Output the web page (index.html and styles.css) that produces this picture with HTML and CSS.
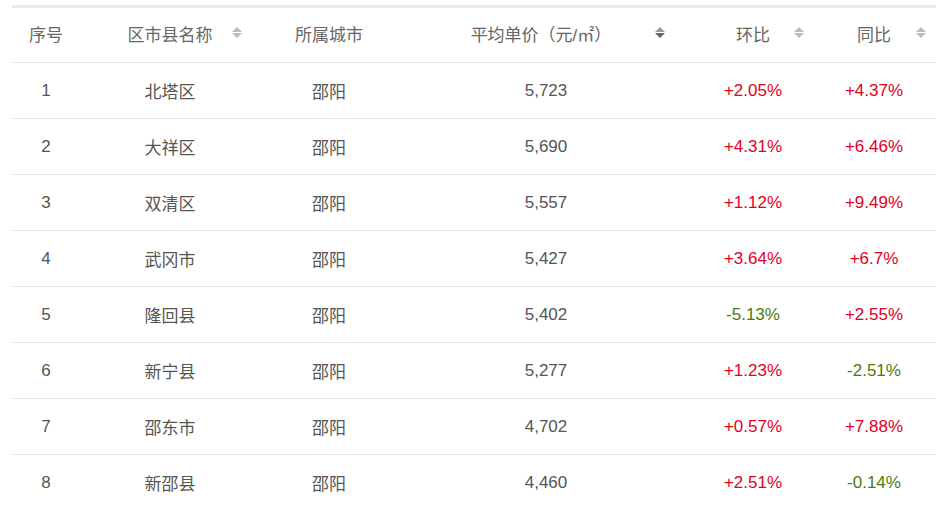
FILE: index.html
```html
<!DOCTYPE html>
<html lang="zh-CN">
<head>
<meta charset="utf-8">
<title>邵阳区县房价</title>
<link rel="stylesheet" href="styles.css">
</head>
<body>
<div class="wrap">
<table class="price-table">
  <colgroup>
    <col class="c1"><col class="c2"><col class="c3"><col class="c4"><col class="c5"><col class="c6">
  </colgroup>
  <thead>
    <tr>
      <th>序号</th>
      <th class="sortable s2">区市县名称<svg class="sort" viewBox="0 0 10 11"><path class="up" d="M5 0 L10 5 L0 5 Z"/><path class="down" d="M0 6 L10 6 L5 11 Z"/></svg></th>
      <th>所属城市</th>
      <th class="sortable s4">平均单价（元/㎡）<svg class="sort" viewBox="0 0 10 11"><path class="up" d="M5 0 L10 5 L0 5 Z"/><path class="down active" d="M0 6 L10 6 L5 11 Z"/></svg></th>
      <th class="sortable s5">环比<svg class="sort" viewBox="0 0 10 11"><path class="up" d="M5 0 L10 5 L0 5 Z"/><path class="down" d="M0 6 L10 6 L5 11 Z"/></svg></th>
      <th class="sortable s6">同比<svg class="sort" viewBox="0 0 10 11"><path class="up" d="M5 0 L10 5 L0 5 Z"/><path class="down" d="M0 6 L10 6 L5 11 Z"/></svg></th>
    </tr>
  </thead>
  <tbody>
    <tr><td>1</td><td>北塔区</td><td>邵阳</td><td>5,723</td><td class="rise">+2.05%</td><td class="rise">+4.37%</td></tr>
    <tr><td>2</td><td>大祥区</td><td>邵阳</td><td>5,690</td><td class="rise">+4.31%</td><td class="rise">+6.46%</td></tr>
    <tr><td>3</td><td>双清区</td><td>邵阳</td><td>5,557</td><td class="rise">+1.12%</td><td class="rise">+9.49%</td></tr>
    <tr><td>4</td><td>武冈市</td><td>邵阳</td><td>5,427</td><td class="rise">+3.64%</td><td class="rise">+6.7%</td></tr>
    <tr><td>5</td><td>隆回县</td><td>邵阳</td><td>5,402</td><td class="fall">-5.13%</td><td class="rise">+2.55%</td></tr>
    <tr><td>6</td><td>新宁县</td><td>邵阳</td><td>5,277</td><td class="rise">+1.23%</td><td class="fall">-2.51%</td></tr>
    <tr><td>7</td><td>邵东市</td><td>邵阳</td><td>4,702</td><td class="rise">+0.57%</td><td class="rise">+7.88%</td></tr>
    <tr><td>8</td><td>新邵县</td><td>邵阳</td><td>4,460</td><td class="rise">+2.51%</td><td class="fall">-0.14%</td></tr>
  </tbody>
</table>
</div>
</body>
</html>
```

FILE: styles.css
```css
html, body {
  margin: 0;
  padding: 0;
  background: #fff;
  overflow: hidden;
}

.wrap {
  padding: 5px 0 0 12px;
}

.price-table {
  width: 924px;
  border-collapse: collapse;
  table-layout: fixed;
  border-top: 3px solid #e8e8ee;
  font-family: "Liberation Sans", "Noto Sans CJK SC", sans-serif;
  font-size: 17px;
  color: #555;
}

.c1 { width: 68px; }
.c2 { width: 180px; }
.c3 { width: 138px; }
.c4 { width: 296px; }
.c5 { width: 118px; }
.c6 { width: 124px; }

.price-table th {
  height: 50px;
  padding: 0 0 4px 0;
  font-weight: normal;
  color: #666;
  text-align: center;
  border-bottom: 1px solid #e8e8e8;
  position: relative;
  white-space: nowrap;
}

.price-table td {
  height: 55px;
  padding: 0;
  text-align: center;
  border-bottom: 1px solid #e8e8e8;
}

.price-table th.s4 { padding-right: 10px; }

.sort {
  position: absolute;
  top: 19px;
  width: 10px;
  height: 11px;
}
.sort .up, .sort .down { fill: #bbb; }
.sort .down.active { fill: #666; }
.s4 .sort .up { fill: #999; }

.s2 .sort { right: 18px; }
.s4 .sort { right: 29px; }
.s5 .sort { right: 8px; }
.s6 .sort { right: 10px; }

.rise { color: #e2001d; }
.fall { color: #4b7b0c; }
```
